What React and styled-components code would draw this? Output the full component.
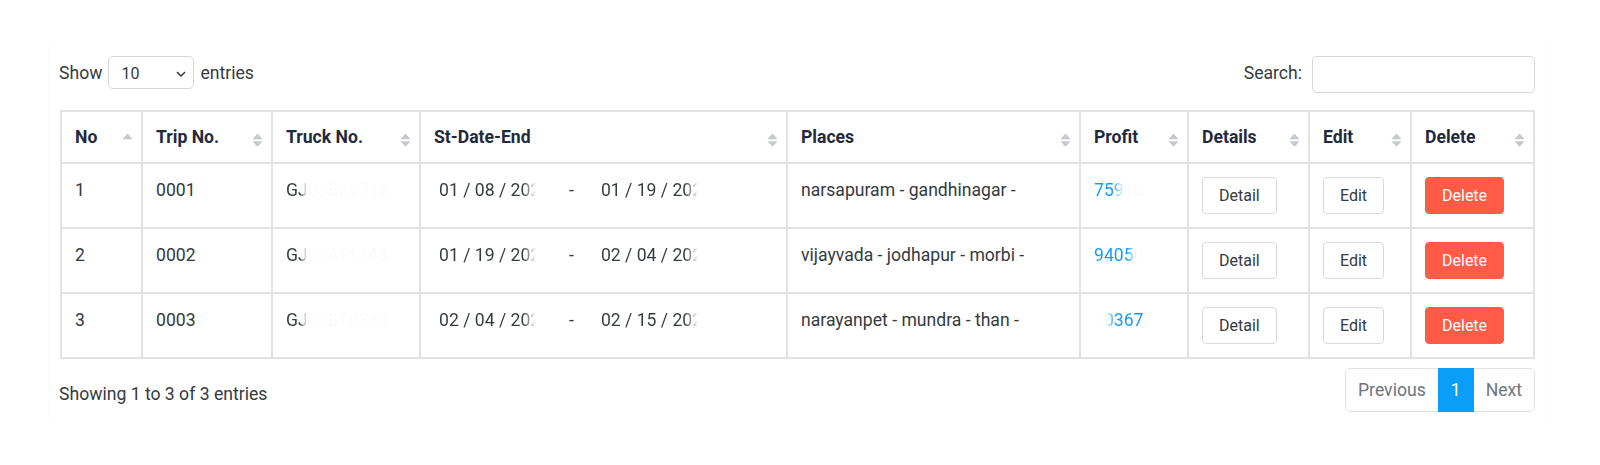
import { createGlobalStyle, styled } from 'styled-components';

const GlobalStyle = createGlobalStyle`
  body {
    margin: 0;
    background: #fff;
    font-family: Roboto, "Liberation Sans", sans-serif;
    color: #343a40;
  }
`;

const rows = [
  {
    no: 1,
    trip: '0001',
    truck: 'GJ03BX2718',
    start: '01 / 08 / 2023',
    end: '01 / 19 / 2023',
    places: 'narsapuram - gandhinagar -',
    profit: '75910',
    profitFade: { from: 18, to: 30 },
  },
  {
    no: 2,
    trip: '0002',
    truck: 'GJ03AT1146',
    start: '01 / 19 / 2023',
    end: '02 / 04 / 2023',
    places: 'vijayvada - jodhapur - morbi -',
    profit: '94050',
    profitFade: { from: 33, to: 42 },
  },
  {
    no: 3,
    trip: '0003',
    truck: 'GJ03BT0340',
    start: '02 / 04 / 2023',
    end: '02 / 15 / 2023',
    places: 'narayanpet - mundra - than -',
    profit: '10367',
    profitFade: { from: 28, to: 37, reverse: true },
  },
];

const columns = [
  { label: 'No', width: 81, onlyUp: true },
  { label: 'Trip No.', width: 130 },
  { label: 'Truck No.', width: 148 },
  { label: 'St-Date-End', width: 367 },
  { label: 'Places', width: 293 },
  { label: 'Profit', width: 108 },
  { label: 'Details', width: 121 },
  { label: 'Edit', width: 102 },
  { label: 'Delete', width: 123 },
];

function SortIcon({ onlyUp }) {
  return (
    <SORT_ST width="11" height="15" viewBox="0 0 11 15">
      <path d="M5.5 0.6 L10.6 6.2 H0.4 Z" fill="#c4c8cf" />
      {!onlyUp && <path d="M0.4 8.2 H10.6 L5.5 13.8 Z" fill="#c4c8cf" />}
    </SORT_ST>
  );
}

function App() {
  return (
    <PAGE_ST>
      <GlobalStyle />
      <CARD_ST>
        <TOPBAR_ST>
          <LABEL_ST>
            Show
            <SELECT_ST>
              <span>10</span>
              <svg width="10" height="6" viewBox="0 0 10 6">
                <polyline points="1,1 5,5 9,1" fill="none" stroke="#343a40" strokeWidth="1.5" />
              </svg>
            </SELECT_ST>
            entries
          </LABEL_ST>
          <SEARCHLABEL_ST>
            Search:
            <SEARCHINPUT_ST type="search" />
          </SEARCHLABEL_ST>
        </TOPBAR_ST>

        <TABLE_ST>
          <colgroup>
            {columns.map((c) => (
              <col key={c.label} style={{ width: c.width }} />
            ))}
          </colgroup>
          <thead>
            <tr>
              {columns.map((c) => (
                <TH_ST key={c.label}>
                  <HEADINNER_ST>
                    {c.label}
                    <SortIcon onlyUp={c.onlyUp} />
                  </HEADINNER_ST>
                </TH_ST>
              ))}
            </tr>
          </thead>
          <tbody>
            {rows.map((r) => (
              <tr key={r.no}>
                <TD_ST>{r.no}</TD_ST>
                <TD_ST>{r.trip}</TD_ST>
                <TD_ST>
                  <FADED_ST $color="#343a40" $from={14} $to={21} $tail="rgba(52,58,64,0.025)">
                    {r.truck}
                  </FADED_ST>
                </TD_ST>
                <TD_ST>
                  <DATERANGE_ST>
                    <DATEFIELD_ST>
                      <FADED_ST $color="#343a40" $from={84} $to={97}>
                        {r.start}
                      </FADED_ST>
                    </DATEFIELD_ST>
                    <DASH_ST>-</DASH_ST>
                    <DATEFIELD_ST>
                      <FADED_ST $color="#343a40" $from={84} $to={97}>
                        {r.end}
                      </FADED_ST>
                    </DATEFIELD_ST>
                  </DATERANGE_ST>
                </TD_ST>
                <TD_ST>{r.places}</TD_ST>
                <TD_ST>
                  <FADED_ST
                    $color="#0d9cf7"
                    $from={r.profitFade.from}
                    $to={r.profitFade.to}
                    $reverse={r.profitFade.reverse}
                    $tail="rgba(13,156,247,0.03)"
                  >
                    {r.profit}
                  </FADED_ST>
                </TD_ST>
                <TD_ST>
                  <BUTTON_ST>Detail</BUTTON_ST>
                </TD_ST>
                <TD_ST>
                  <BUTTON_ST>Edit</BUTTON_ST>
                </TD_ST>
                <TD_ST>
                  <BUTTON_ST $danger>Delete</BUTTON_ST>
                </TD_ST>
              </tr>
            ))}
          </tbody>
        </TABLE_ST>

        <FOOTER_ST>
          <INFO_ST>Showing 1 to 3 of 3 entries</INFO_ST>
          <PAGER_ST>
            <PAGEITEM_ST>Previous</PAGEITEM_ST>
            <PAGEITEM_ST $active>1</PAGEITEM_ST>
            <PAGEITEM_ST>Next</PAGEITEM_ST>
          </PAGER_ST>
        </FOOTER_ST>
      </CARD_ST>
    </PAGE_ST>
  );
}

const PAGE_ST = styled.div`
  padding: 43px 0 0 48px;
`;

const CARD_ST = styled.div`
  width: 1498px;
  box-sizing: border-box;
  border: 1px solid #fbfbfb;
  padding: 12px 10px 7px 10px;
  font-size: 17.6px;
`;

const TOPBAR_ST = styled.div`
  display: flex;
  justify-content: space-between;
  align-items: flex-start;
`;

const LABEL_ST = styled.label`
  display: flex;
  align-items: center;
  gap: 6px;
  height: 33px;
  color: #343a40;
`;

const SELECT_ST = styled.div`
  width: 86px;
  height: 33px;
  box-sizing: border-box;
  border: 1px solid #d4d8dd;
  border-radius: 5px;
  display: flex;
  align-items: center;
  justify-content: space-between;
  padding: 2px 7px 0 12px;
  font-size: 16px;
  color: #343a40;
`;

const SEARCHLABEL_ST = styled.label`
  display: flex;
  align-items: flex-start;
  gap: 10px;
  height: 37px;
  line-height: 34px;
  color: #343a40;
`;

const SEARCHINPUT_ST = styled.input`
  width: 223px;
  height: 37px;
  box-sizing: border-box;
  border: 1px solid #d4d8dd;
  border-radius: 5px;
  outline: none;
`;

const TABLE_ST = styled.table`
  width: 1475px;
  margin: 17px 0 0 1px;
  border-collapse: collapse;
  table-layout: fixed;
`;

const TH_ST = styled.th`
  border: 2px solid #e2e2e2;
  padding: 13px 8px 13px 13px;
  text-align: left;
  font-weight: 700;
  line-height: 24px;
  color: #1f2a3c;
`;

const HEADINNER_ST = styled.div`
  display: flex;
  justify-content: space-between;
  align-items: center;
`;

const SORT_ST = styled.svg`
  margin-top: 6px;
  flex-shrink: 0;
`;

const TD_ST = styled.td`
  border: 2px solid #e2e2e2;
  padding: 13px;
  vertical-align: top;
  line-height: 27px;
  color: #343a40;
  white-space: nowrap;
`;

const FADED_ST = styled.span`
  background: linear-gradient(
    ${(p) => (p.$reverse ? 'to left' : 'to right')},
    ${(p) => p.$color} ${(p) => p.$from}px,
    ${(p) => p.$tail || 'rgba(255,255,255,0)'} ${(p) => p.$to}px
  );
  -webkit-background-clip: text;
  background-clip: text;
  color: transparent;
`;

const DATERANGE_ST = styled.div`
  display: flex;
  align-items: center;
`;

const DATEFIELD_ST = styled.span`
  width: 125px;
  padding-left: 5px;
`;

const DASH_ST = styled.span`
  margin: 0 22px 0 5px;
`;

const BUTTON_ST = styled.button`
  display: inline-block;
  vertical-align: top;
  font-family: Roboto, "Liberation Sans", sans-serif;
  font-size: 16px;
  line-height: 24px;
  padding: 5.5px 16px;
  border-radius: 4px;
  border: 1px solid ${(p) => (p.$danger ? '#ff5b46' : '#d7d9dc')};
  background: ${(p) => (p.$danger ? '#ff5b46' : '#fff')};
  color: ${(p) => (p.$danger ? '#fff' : '#343a40')};
  cursor: pointer;
`;

const FOOTER_ST = styled.div`
  display: flex;
  justify-content: space-between;
  align-items: flex-start;
  margin-top: 9px;
`;

const INFO_ST = styled.div`
  padding-top: 14px;
  line-height: 24px;
  color: #343a40;
`;

const PAGER_ST = styled.div`
  display: flex;
`;

const PAGEITEM_ST = styled.span`
  padding: 9px 12px;
  line-height: 24px;
  border: 1px solid ${(p) => (p.$active ? '#0a9ef8' : '#dee2e6')};
  background: ${(p) => (p.$active ? '#0a9ef8' : '#fff')};
  color: ${(p) => (p.$active ? '#fff' : '#6c757d')};
  position: relative;
  z-index: ${(p) => (p.$active ? 1 : 0)};

  & + & {
    margin-left: -1px;
  }
  &:first-child {
    border-radius: 5px 0 0 5px;
  }
  &:last-child {
    border-radius: 0 5px 5px 0;
  }
`;

export default App;
